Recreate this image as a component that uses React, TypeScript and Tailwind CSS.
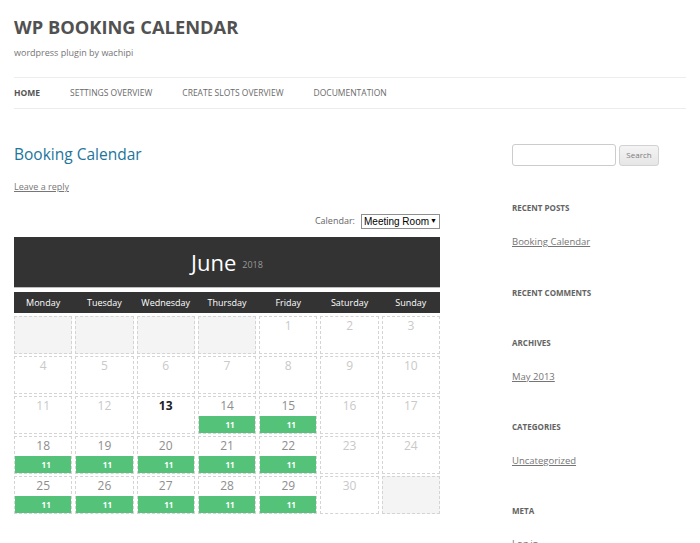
import React from 'react'

type Day = { n?: number; booked?: boolean; today?: boolean }

const weeks: Day[][] = [
  [{}, {}, {}, {}, { n: 1 }, { n: 2 }, { n: 3 }],
  [{ n: 4 }, { n: 5 }, { n: 6 }, { n: 7 }, { n: 8 }, { n: 9 }, { n: 10 }],
  [{ n: 11 }, { n: 12 }, { n: 13, today: true }, { n: 14, booked: true }, { n: 15, booked: true }, { n: 16 }, { n: 17 }],
  [{ n: 18, booked: true }, { n: 19, booked: true }, { n: 20, booked: true }, { n: 21, booked: true }, { n: 22, booked: true }, { n: 23 }, { n: 24 }],
  [{ n: 25, booked: true }, { n: 26, booked: true }, { n: 27, booked: true }, { n: 28, booked: true }, { n: 29, booked: true }, { n: 30 }, {}],
]

const dayNames = ['Monday', 'Tuesday', 'Wednesday', 'Thursday', 'Friday', 'Saturday', 'Sunday']

const nav = ['Home', 'Settings Overview', 'Create Slots Overview', 'Documentation']

function Cell({ day }: { day: Day }) {
  if (!day.n) {
    return <div className="h-[38px] border border-dashed border-[#d4d4d4] bg-[#f4f4f4]" />
  }
  return (
    <div className="h-[38px] border border-dashed border-[#d4d4d4] bg-white flex flex-col justify-between">
      <div
        className={
          'text-center text-[12px] leading-[16px] pt-[1px] ' +
          (day.today ? 'font-bold text-[#222]' : day.booked ? 'text-[#8e8e8e]' : 'text-[#c9c9c9]')
        }
      >
        {day.n}
      </div>
      {day.booked && (
        <div className="h-[17px] bg-[#55c27a] flex items-center justify-center pl-[6px] text-[8px] font-bold text-white">
          11
        </div>
      )}
    </div>
  )
}

function WidgetTitle({ children, className = '' }: { children: React.ReactNode; className?: string }) {
  return <h3 className={'text-[8px] leading-[12px] font-bold uppercase text-[#636363] ' + className}>{children}</h3>
}

function WidgetLink({ children, className = '' }: { children: React.ReactNode; className?: string }) {
  return <a className={'block text-[9.5px] leading-[14px] text-[#757575] underline ' + className}>{children}</a>
}

export default function App() {
  return (
    <div className="w-[700px] h-[543px] overflow-hidden bg-white px-[14px] font-['Open_Sans',sans-serif]">
      {/* header */}
      <header>
        <h1 className="pt-[15px] text-[18.3px] leading-[24px] font-bold text-[#515151]">WP BOOKING CALENDAR</h1>
        <p className="mt-[7px] text-[9px] leading-[14px] text-[#757575]">wordpress plugin by wachipi</p>
        <nav className="mt-[17px] h-[32px] border-t border-b border-[#ededed] flex items-center gap-[30px]">
          {nav.map((item, i) => (
            <span
              key={item}
              className={'text-[8.5px] uppercase ' + (i === 0 ? 'font-bold text-[#555]' : 'text-[#6a6a6a]')}
            >
              {item}
            </span>
          ))}
        </nav>
      </header>

      <div className="flex">
        {/* main column */}
        <main className="w-[426px]">
          <h2 className="mt-[35px] text-[15.5px] leading-[20px] text-[#21759b]">Booking Calendar</h2>
          <a className="block mt-[16px] text-[9px] leading-[14px] text-[#777] underline">Leave a reply</a>

          <div className="mt-[20px] h-[14px] flex items-center justify-end">
            <span className="text-[9px] text-[#666] mr-[6px]">Calendar:</span>
            <div className="h-[15px] w-[79px] border border-[#8f8f8f] bg-white flex items-center justify-between px-[2px] font-['Liberation_Sans',Arial,sans-serif] text-[10px] text-black">
              <span>Meeting Room</span>
              <span className="text-[7px]">▼</span>
            </div>
          </div>

          {/* calendar */}
          <div className="mt-[9px] h-[50px] bg-[#333] flex items-center justify-center">
            <span className="text-[22px] leading-[26px] text-white">June</span>
            <span className="ml-[6px] mt-[6px] text-[9px] text-[#999]">2018</span>
          </div>
          <div className="h-[1px] bg-[#bdbdbd]" />
          <div className="mt-[4px] h-[21px] bg-[#333] grid grid-cols-7 gap-x-[3px] items-center">
            {dayNames.map(d => (
              <span key={d} className="text-center text-[9px] font-medium text-white">{d}</span>
            ))}
          </div>
          <div className="mt-[3px] grid grid-cols-7 gap-x-[3px] gap-y-[2px]">
            {weeks.flat().map((d, i) => (
              <Cell key={i} day={d} />
            ))}
          </div>
        </main>

        {/* sidebar */}
        <aside className="ml-[72px] w-[174px]">
          <div className="mt-[35px] flex items-center">
            <div className="h-[22px] w-[104px] border border-[#ccc] rounded-[3px] bg-white" />
            <div className="ml-[3px] h-[21px] w-[40px] border border-[#d2d2d2] rounded-[3px] bg-gradient-to-b from-[#f4f4f4] to-[#e6e6e6] flex items-center justify-center text-[8px] text-[#7c7c7c]">
              Search
            </div>
          </div>

          <WidgetTitle className="mt-[36px]">Recent Posts</WidgetTitle>
          <WidgetLink className="mt-[21px]">Booking Calendar</WidgetLink>

          <WidgetTitle className="mt-[38px]">Recent Comments</WidgetTitle>

          <WidgetTitle className="mt-[38px]">Archives</WidgetTitle>
          <WidgetLink className="mt-[21px]">May 2013</WidgetLink>

          <WidgetTitle className="mt-[37px]">Categories</WidgetTitle>
          <WidgetLink className="mt-[21px]">Uncategorized</WidgetLink>

          <WidgetTitle className="mt-[37px]">Meta</WidgetTitle>
          <WidgetLink className="mt-[20px]">Log in</WidgetLink>
        </aside>
      </div>
    </div>
  )
}
